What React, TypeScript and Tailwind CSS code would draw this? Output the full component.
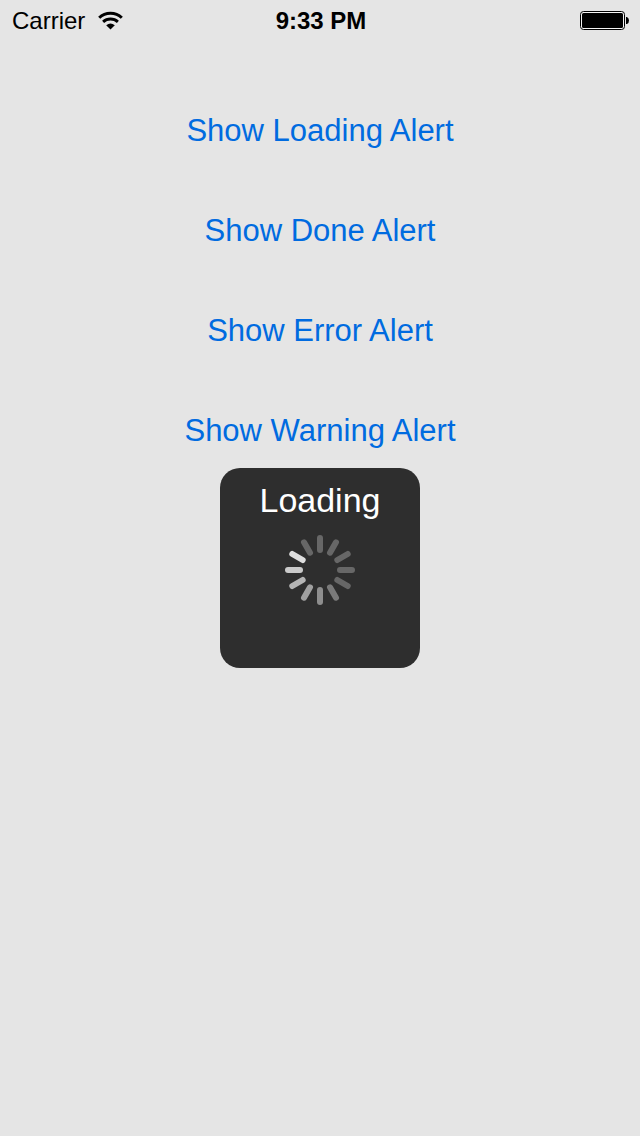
import React from "react";

const actions = ["Show Loading Alert", "Show Done Alert", "Show Error Alert", "Show Warning Alert"];

const spokes = ["#676767", "#676767", "#676767", "#676767", "#676767", "#7a7a7a", "#8e8e8e", "#a0a0a0", "#b4b4b4", "#cacaca", "#dedede", "#676767"];

function StatusBar() {
  return (
    <header className="grid h-10 grid-cols-[1fr_auto_1fr] items-center pt-0.5 pr-2.5 pl-3 text-2xl text-black">
      <div className="flex items-center gap-3">
        <span>Carrier</span>
        <svg className="h-5 w-7" viewBox="0 0 28 20" role="img" aria-label="Wi-Fi">
          <path d="M13.5 18.5 9.2 14.2a7 7 0 0 1 8.6 0Z" />
          <path d="M6.1 10.9a11 11 0 0 1 14.8 0M2.2 6.8a16.2 16.2 0 0 1 22.6 0" fill="none" stroke="#000" strokeWidth="3" />
        </svg>
      </div>
      <time className="text-center font-semibold">9:33 PM</time>
      <svg className="h-5 w-[50px] justify-self-end" viewBox="0 0 50 20" role="img" aria-label="Battery full">
        <rect x="0.5" y="0.5" width="44" height="18" rx="3" fill="#f4f4f4" stroke="#000" />
        <rect x="2" y="2" width="41" height="15" rx="1.5" />
        <path d="M46 6h1q2 1 2 3.5t-2 3.5h-1Z" />
      </svg>
    </header>
  );
}

function Spinner() {
  return (
    <svg className="size-[70px]" viewBox="-35 -35 70 70" aria-hidden="true">
      {spokes.map((color, i) => (
        <rect key={i} x="-3" y="-35" width="6" height="18" rx="3" fill={color} transform={`rotate(${i * 30})`} />
      ))}
    </svg>
  );
}

export default function App() {
  return (
    <div className="relative min-h-screen bg-[#e5e5e5] font-['Liberation_Sans',sans-serif]">
      <StatusBar />
      <main className="flex flex-col items-center gap-10 pt-[61px]">
        {actions.map((label) => (
          <button key={label} type="button" className="h-15 text-[31px] text-[#006be0]">
            {label}
          </button>
        ))}
      </main>
      <div className="absolute inset-0 flex items-center justify-center">
        <div role="status" className="flex size-50 flex-col items-center gap-[15px] rounded-[20px] bg-[#2e2e2e] pt-3 text-white">
          <p className="text-[34px] leading-10">Loading</p>
          <Spinner />
        </div>
      </div>
    </div>
  );
}
